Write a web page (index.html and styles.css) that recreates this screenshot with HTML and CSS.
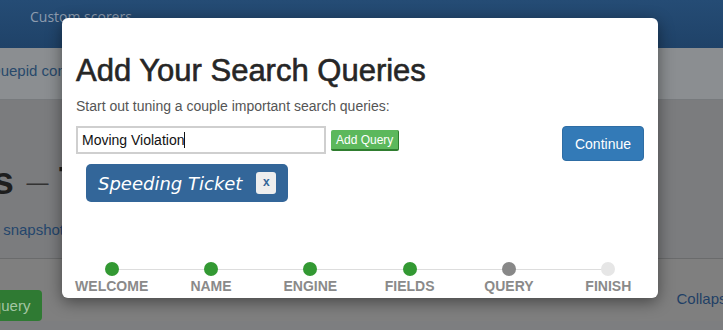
FILE: index.html
```html
<!DOCTYPE html>
<html lang="en">
<head>
    <meta charset="UTF-8">
    <title>Quepid - Add Queries</title>
    <link rel="stylesheet" href="styles.css">
</head>
<body>
    <div class="navbar">
        <span class="nav-link">Custom scorers</span>
    </div>
    <div class="subbar">
        <span class="sub-link">Quepid config</span>
    </div>
    <div class="content">
        <div class="case-title">Cases <span class="dash">—</span> Tuning</div>
        <div class="snapshot-link">› snapshot</div>
    </div>
    <div class="lower">
        <span class="query-btn">Add query</span>
        <span class="collapse-link">Collapse all</span>
    </div>

    <div class="modal">
        <h1 class="modal-title">Add Your Search Queries</h1>
        <p class="modal-sub">Start out tuning a couple important search queries:</p>
        <div class="modal-body">
            <div class="query-area">
                <div class="query-row">
                    <div class="query-input">Moving Violation<span class="caret"></span></div>
                    <span class="add-btn">Add Query</span>
                </div>
                <div class="tag">
                    <span class="tag-text">Speeding Ticket</span>
                    <span class="tag-x">x</span>
                </div>
            </div>
            <span class="continue-btn">Continue</span>
        </div>
        <div class="steps">
            <div class="step done"><span class="dot"></span><span class="label">Welcome</span></div>
            <div class="step done"><span class="dot"></span><span class="label">Name</span></div>
            <div class="step done"><span class="dot"></span><span class="label">Engine</span></div>
            <div class="step done"><span class="dot"></span><span class="label">Fields</span></div>
            <div class="step current"><span class="dot"></span><span class="label">Query</span></div>
            <div class="step"><span class="dot"></span><span class="label">Finish</span></div>
        </div>
    </div>
</body>
</html>
```

FILE: styles.css
```css
body {
    margin: 0;
    font-family: "Liberation Sans", Arial, sans-serif;
    background-color: #7d7e80;
    overflow: hidden;
}

.navbar {
    height: 48px;
    background: linear-gradient(#254c75, #1f4268);
    padding-left: 30px;
    box-sizing: border-box;
}

.nav-link {
    display: inline-block;
    margin-top: 7px;
    font-family: "Open Sans", sans-serif;
    font-size: 14px;
    color: #8e9cae;
}

.subbar {
    height: 52px;
    background-color: #8b8e91;
    border-bottom: 1px solid #777a7d;
    box-sizing: border-box;
    padding-top: 14px;
    margin-left: -11px;
    white-space: nowrap;
}

.sub-link {
    font-size: 15px;
    color: #28496b;
}

.content {
    height: 159px;
    background-color: #7b7c7e;
    border-bottom: 1px solid #6a6b6c;
    box-sizing: border-box;
    margin-left: -98px;
    white-space: nowrap;
}

.case-title {
    padding-top: 60px;
    font-size: 38px;
    font-weight: bold;
    color: #1e1e1e;
}

.dash {
    font-weight: normal;
    font-size: 22px;
    color: #333;
    margin-left: 2px;
    vertical-align: 4px;
}

.snapshot-link {
    margin-top: 18px;
    margin-left: 92px;
    font-size: 15px;
    color: #24466c;
}

.lower {
    display: flex;
    align-items: center;
    justify-content: space-between;
    padding-top: 31px;
    background-color: #7f7f7f;
    white-space: nowrap;
}

.query-btn {
    display: inline-block;
    margin-left: -50px;
    padding: 7px 12px;
    background-color: #2f7a33;
    border-radius: 4px;
    font-size: 15px;
    color: #a3c6a3;
}

.collapse-link {
    margin-right: -31px;
    margin-top: -14px;
    font-size: 15px;
    color: #1f3f66;
}

.modal {
    position: absolute;
    left: 62px;
    top: 18px;
    width: 596px;
    height: 280px;
    background-color: #ffffff;
    border-radius: 6px;
    box-shadow: 0 4px 16px rgba(0, 0, 0, 0.45);
    box-sizing: border-box;
    padding: 0 14px;
}

.modal-title {
    margin: 36px 0 0 0;
    font-size: 31px;
    font-weight: normal;
    line-height: 34px;
    color: #262626;
    -webkit-text-stroke: 0.6px #262626;
}

.modal-sub {
    margin: 10px 0 0 0;
    font-size: 14px;
    color: #555;
}

.modal-body {
    display: flex;
    justify-content: space-between;
    margin-top: 12px;
}

.query-row {
    display: flex;
    align-items: center;
}

.query-input {
    width: 250px;
    height: 28px;
    border: 2px solid #cfcfcf;
    box-sizing: border-box;
    padding: 0 4px;
    font-size: 14px;
    line-height: 24px;
    color: #111;
}

.caret {
    display: inline-block;
    width: 1px;
    height: 16px;
    background-color: #111;
    vertical-align: -3px;
}

.add-btn {
    margin-left: 5px;
    padding: 3px 5px 2px;
    background-color: #5cb85c;
    border-bottom: 2px solid #2f7d2f;
    border-right: 1px solid #2f7d2f;
    border-radius: 2px;
    font-size: 12px;
    color: #fff;
}

.tag {
    display: inline-flex;
    align-items: center;
    margin: 10px 0 0 10px;
    height: 38px;
    padding: 0 12px;
    background-color: #336699;
    border-radius: 5px;
}

.tag-text {
    font-family: "DejaVu Sans", Verdana, sans-serif;
    font-style: italic;
    font-size: 18px;
    color: #fff;
}

.tag-x {
    margin-left: 14px;
    width: 20px;
    height: 22px;
    background-color: #eee;
    border-radius: 3px;
    font-size: 12px;
    font-weight: bold;
    line-height: 21px;
    text-align: center;
    color: #336699;
}

.continue-btn {
    align-self: flex-start;
    padding: 8px 12px 7px;
    background-color: #337ab7;
    border: 1px solid #2e6da4;
    border-radius: 4px;
    font-size: 14px;
    line-height: 18px;
    color: #fff;
}

.steps {
    display: flex;
    margin: 60px -14px 0;
}

.step {
    flex: 1;
    display: flex;
    flex-direction: column;
    align-items: center;
    position: relative;
}

.step::before {
    content: "";
    position: absolute;
    top: 7px;
    left: 0;
    right: 0;
    height: 1px;
    background-color: #ddd;
}

.step:first-child::before {
    left: 50%;
}

.step:last-child::before {
    right: 50%;
}

.dot {
    position: relative;
    width: 14px;
    height: 14px;
    border-radius: 50%;
    background-color: #e6e6e6;
}

.step.done .dot {
    background-color: #339933;
}

.step.current .dot {
    background-color: #888;
}

.label {
    margin-top: 2px;
    font-size: 14px;
    font-weight: bold;
    text-transform: uppercase;
    color: #8a8a8a;
}
```
